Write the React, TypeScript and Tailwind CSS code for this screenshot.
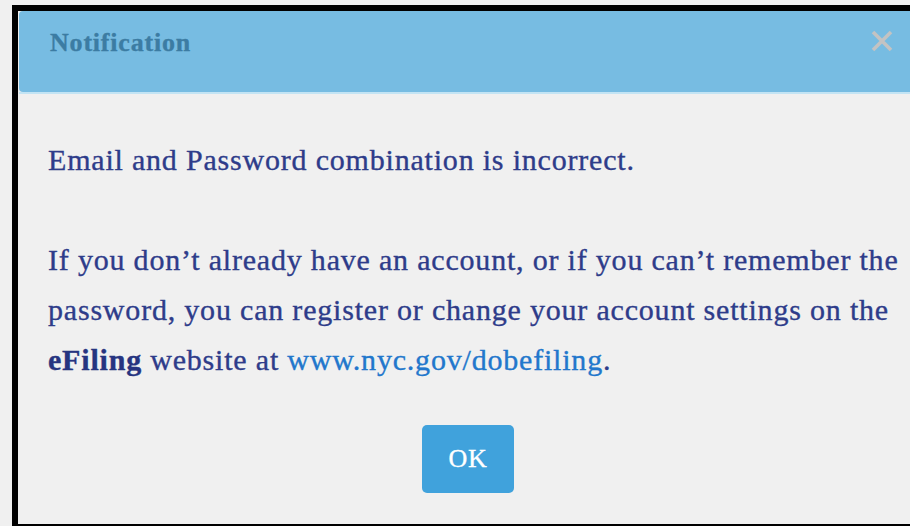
import React from 'react'

const CloseIcon: React.FC = () => (
  <svg width="24" height="24" viewBox="0 0 24 24" className="shrink-0">
    <path
      d="M3 3 L21 21 M21 3 L3 21"
      stroke="#c3c3c3"
      strokeWidth="3.6"
      strokeLinecap="butt"
    />
  </svg>
)

const App: React.FC = () => {
  return (
    <div className="h-[526px] w-[910px] overflow-hidden bg-[#f0f0f0] font-[Liberation_Serif,serif] [-webkit-text-stroke:0.35px]">
      <div className="ml-[12px] mt-[5px] h-[521px] w-[930px] border-b-2 border-l-[6px] border-t-[6px] border-black bg-[#f0f0f0] pl-px">
        {/* dialog header */}
        <div className="flex h-[81px] items-start justify-between rounded-l-[4px] bg-[#77bce2] pl-[31px] pr-[48px] pt-[17px]">
          <h2 className="text-[26px] font-bold leading-[30px] tracking-[0.8px] text-[#3c7ca3]">
            Notification
          </h2>
          <div className="mt-[1px]">
            <CloseIcon />
          </div>
        </div>
        <div className="h-[2px] bg-[#c3e4f4]" />

        {/* dialog body */}
        <div className="pl-[29px] pt-[41px] text-[30px] leading-[50px] tracking-[0.8px] text-[#2e3c8a]">
          <p className="whitespace-nowrap">Email and Password combination is incorrect.</p>
          <p className="mt-[50px] whitespace-nowrap">
            If you don’t already have an account, or if you can’t remember the
            <br />
            password, you can register or change your account settings on the
            <br />
            <b className="font-bold text-[#263480]">eFiling</b> website at{' '}
            <a href="#" className="text-[#2277cc]">
              www.nyc.gov/dobefiling
            </a>
            .
          </p>
          <div className="mt-[40px] flex w-[840px] justify-center">
            <button className="h-[68px] w-[92px] rounded-[5px] bg-[#40a2dc] text-[26px] tracking-[0.8px] text-white">
              OK
            </button>
          </div>
        </div>
      </div>
    </div>
  )
}

export default App
